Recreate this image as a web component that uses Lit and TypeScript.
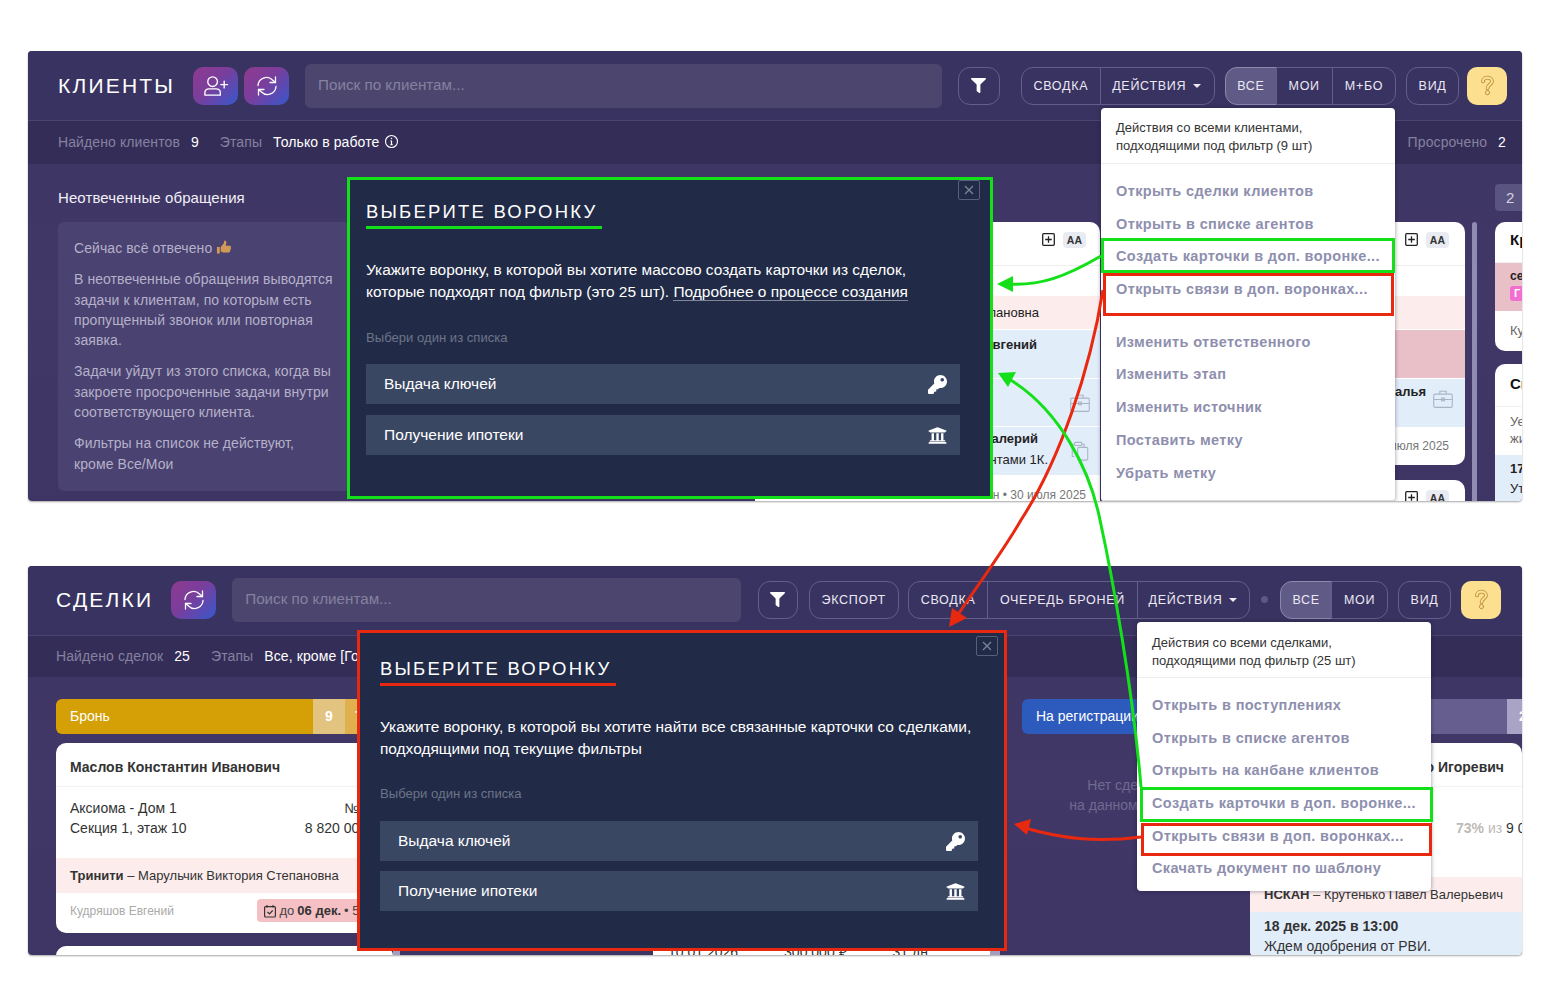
import { LitElement, html, css, svg, unsafeCSS } from "lit";
import { customElement } from "lit/decorators.js";

const GREEN = "#14e01a";
const RED = "#e8280f";
const greenCss = unsafeCSS(GREEN);
const redCss = unsafeCSS(RED);

const KEY =
  "M512 176C512 273 433 352 336 352c-11 0-22-1-33-3l-24 27a24 24 0 0 1-18 8h-37v40c0 13-11 24-24 24h-40v40c0 13-11 24-24 24H24c-13 0-24-11-24-24v-78c0-6 3-12 7-17l162-162C163 214 160 195 160 176 160 79 239 0 336 0 433 0 512 79 512 176zM336 128c0 27 21 48 48 48s48-21 48-48-21-48-48-48-48 21-48 48z";
const BANK =
  "M496 128v16a8 8 0 0 1-8 8h-24v12c0 7-5 12-12 12H60c-7 0-12-5-12-12v-12H24a8 8 0 0 1-8-8v-16a8 8 0 0 1 5-7l232-88a8 8 0 0 1 6 0l232 88a8 8 0 0 1 5 7zm-24 304H40c-13 0-24 11-24 24v16a8 8 0 0 0 8 8h464a8 8 0 0 0 8-8v-16c0-13-11-24-24-24zM96 192v192H60c-7 0-12 5-12 12v20h416v-20c0-7-5-12-12-12h-36V192h-64v192h-64V192h-64v192h-64V192H96z";
const FILTER =
  "M488 0H24C3 0-8 26 7 41L192 226V432c0 8 4 15 10 20l80 56c16 11 38 0 38-20V226L505 41C520 26 509 0 488 0z";

const keyIcon = html`<svg class="fn-ico" viewBox="0 0 512 512"><path fill="#fff" d=${KEY}></path></svg>`;
const bankIcon = html`<svg class="fn-ico" viewBox="0 0 512 512"><path fill="#fff" d=${BANK}></path></svg>`;

const syncIcon = html`<svg class="grad-ico" viewBox="0 0 24 24" fill="none" stroke="#fff" stroke-width="1.300" stroke-linecap="round" stroke-linejoin="round">
  <path d="M3 11.500a8.500 8.500 0 0 1 14.500-5.500l3 2.500"></path><path d="M20.500 3V8.500H15"></path>
  <path d="M21 12.500a8.500 8.500 0 0 1-14.500 5.500l-3-2.500"></path><path d="M3.500 21V15.500H9"></path>
</svg>`;

const userPlusIcon = html`<svg class="grad-ico wide" viewBox="0 0 28 24" fill="none" stroke="#fff" stroke-width="1.400" stroke-linecap="round" stroke-linejoin="round">
  <circle cx="11" cy="7.500" r="5"></circle>
  <path d="M3 21.500v-2.500c0-2.500 2-4 4.500-4h7c2.500 0 4.500 1.500 4.500 4v2.500z"></path>
  <path d="M23 7v7M19.500 10.500h7"></path>
</svg>`;

const helpIcon = html`<svg class="help-ico" viewBox="0 0 20 28" fill="none" stroke-linecap="round" stroke-linejoin="round">
  <path stroke="#b98f3c" stroke-width="5" d="M4 8.500C4 5 7 3.500 10 3.500s6 2 6 5c0 4-6 4.500-6 9"></path>
  <circle cx="10" cy="23.500" r="2.800" fill="#fde08f" stroke="#b98f3c" stroke-width="1.300"></circle>
  <path stroke="#fde08f" stroke-width="2.700" d="M4 8.500C4 5 7 3.500 10 3.500s6 2 6 5c0 4-6 4.500-6 9"></path>
</svg>`;

const infoIcon = html`<svg class="info-ico" viewBox="0 0 16 16" fill="none" stroke="#fff" stroke-width="1.200">
  <circle cx="8" cy="8" r="6.400"></circle>
  <path d="M8 7.300v4M6.800 11.400h2.400M6.900 7.300H8" stroke-width="1.300"></path>
  <circle cx="8" cy="4.800" r=".8" fill="#fff" stroke="none"></circle>
</svg>`;

const thumbIcon = html`<svg class="thumb" viewBox="0 0 16 16">
  <path fill="#cf9a58" d="M1 7.500h3v7H1zM5 7.500l3-3.500 1-3.500c1.500 0 2.300 1 2 2.800L10.500 6H15c1 0 1.200 1.200.6 1.800.6.600.5 1.500-.2 1.900.4.700.2 1.500-.5 1.800.3.800-.2 1.700-1.100 1.700H8c-1.500 0-3-.7-3-1.500z"></path>
</svg>`;

const plusBox = html`<svg class="plus-box" viewBox="0 0 13 13" fill="none" stroke="#222" stroke-width="1.300">
  <rect x=".7" y=".7" width="11.600" height="11.600" rx="1"></rect><path d="M6.500 3.200v6.600M3.200 6.500h6.600"></path>
</svg>`;

const briefcase = html`<svg class="soft-ico" viewBox="0 0 22 20" fill="none" stroke="#a9b4c6" stroke-width="1.200">
  <rect x=".8" y="4.600" width="20.400" height="14.600" rx="1.500"></rect>
  <path d="M7.500 4.600V1.400h7v3.200M.8 10.500h20.400"></path><rect x="9.500" y="9" width="3" height="3"></rect>
</svg>`;

const clipboard = html`<svg class="soft-ico" viewBox="0 0 22 22" fill="none" stroke="#a9b4c6" stroke-width="1.200">
  <path d="M5 17H2.500V3.500H5M13 3.500h2.500v3"></path><rect x="5" y="1.500" width="8" height="3.500" rx="1"></rect>
  <rect x="8.500" y="7" width="11" height="14" rx="1.500"></rect>
</svg>`;

const calendar = html`<svg class="cal" viewBox="0 0 14 14" fill="none" stroke="#333" stroke-width="1.200">
  <rect x="1.600" y="2.600" width="10.800" height="10.400" rx="1"></rect>
  <path d="M4 1v2.500M10 1v2.500M4.500 8l2 2 3.200-3.500"></path>
</svg>`;

@customElement("app-root")
export class AppRoot extends LitElement {
  static styles = css`
    :host {
      display: block;
      position: relative;
      width: 1557px;
      height: 1000px;
      background: #fff;
      font-family: "Liberation Sans", Arial, sans-serif;
      overflow: hidden;
    }

    .page {
      display: flex;
      flex-direction: column;
      gap: 65px;
      padding: 51px 35px 0 28px;
    }

    .win {
      position: relative;
      overflow: hidden;
      border-radius: 4px;
      background: linear-gradient(180deg, #3a3463 0%, #423867 55%, #3f3565 100%);
      box-shadow: 0 1px 2px rgba(0, 0, 0, 0.35);
    }

    .win.clients { height: 450px; }
    .win.deals { height: 389px; }

    /* header */
    .head {
      display: flex;
      align-items: center;
      height: 70px;
      padding: 0 15px 0 30px;
      border-bottom: 1px solid #4a4470;
      box-sizing: border-box;
      background: #393361;
    }

    .deals .head { padding: 0 21px 2px 28px; }

    .title {
      font-size: 21px;
      letter-spacing: 2.200px;
      color: #fff;
      margin-right: 18px;
    }

    .grad {
      display: flex;
      align-items: center;
      justify-content: center;
      width: 45px;
      height: 38px;
      margin-right: 6px;
      border-radius: 10px;
      background: linear-gradient(135deg, #8f3a8f 0%, #7a3e9c 45%, #3658cc 100%);
    }

    .grad-ico { width: 24px; height: 24px; }
    .grad-ico.wide { width: 27px; }

    .search {
      flex: 1;
      height: 44px;
      margin: 0 16px 0 10px;
      padding: 0 0 2px 13px;
      box-sizing: border-box;
      display: flex;
      align-items: center;
      border-radius: 6px;
      background: #4c466f;
      color: #85819f;
      font-size: 15.200px;
    }

    .deals .search { margin-right: 17px; }

    .btn {
      display: flex;
      align-items: center;
      justify-content: center;
      height: 38px;
      box-sizing: border-box;
      padding: 0 12px;
      border: 1px solid #645e8b;
      color: #ece9f4;
      font-size: 12.500px;
      letter-spacing: 0.700px;
      white-space: nowrap;
    }

    .round { border-radius: 12px; }
    .left { border-radius: 12px 0 0 12px; }
    .right { border-radius: 0 12px 12px 0; margin-left: -1px; }
    .mid { margin-left: -1px; padding: 0 11.500px; }
    .clients .mid { padding: 0 12px; }
    .on { background: #5f5a86; border-color: #8d89ad; padding: 0 11px; }
    .view { padding: 0 11.500px; }
    .actions { padding: 0 13px 0 11px; }
    .deals .actions { padding-right: 12px; }
    .caret {
      width: 0;
      height: 0;
      margin-left: 7px;
      border: 4px solid transparent;
      border-top-color: #ece9f4;
      border-bottom: 0;
    }

    .filter-btn { width: 42px; padding: 0; margin-right: 21px; }
    .filter-btn svg { width: 15px; height: 15px; }
    .deals .filter-btn { width: 40px; margin-right: 11px; }
    .gap10 { margin-left: 10px; }
    .gap9 { margin-left: 9px; }
    .dot {
      flex: none;
      width: 7px;
      height: 7px;
      margin: 0 12px 0 11px;
      border-radius: 50%;
      background: #5d5886;
    }

    .help {
      display: flex;
      align-items: center;
      justify-content: center;
      width: 40px;
      height: 38px;
      margin-left: 10px;
      border-radius: 10px;
      background: #fde08f;
    }

    .clients .help { margin-left: 8px; }
    .help-ico { width: 15px; height: 25px; }

    /* sub bar */
    .sub {
      display: flex;
      align-items: center;
      height: 43px;
      padding: 0 16px 2px 30px;
      box-sizing: border-box;
      background: #332d57;
      font-size: 14px;
      letter-spacing: 0.100px;
      color: #85819f;
      white-space: nowrap;
    }

    .deals .sub { height: 41px; padding-left: 28px; }
    .sub b { font-weight: 400; color: #fff; margin: 0 21px 0 11px; }
    .sub b.last { margin-right: 5px; }
    .sub b.end { margin-right: 0; }
    .sub .push { margin-left: auto; }
    .info-ico { width: 15px; height: 15px; }

    /* clients board */
    .board {
      display: flex;
      padding-left: 30px;
      height: 340px;
    }

    .panel-col { width: 300px; flex: none; }
    .panel-title { margin: 24px 0 14px; line-height: 20px; font-size: 15px; letter-spacing: 0.100px; color: #f1eff7; }
    .panel {
      height: 269px;
      padding: 16px 16px;
      box-sizing: border-box;
      border-radius: 6px;
      background: #4a4270;
      color: #b5b1ca;
      font-size: 14px;
      letter-spacing: 0.080px;
      line-height: 20.300px;
    }
    .panel p { margin: 0 0 11px; width: 264px; }
    .thumb { width: 15px; height: 15px; vertical-align: -2px; }

    .k-col { flex: none; padding-top: 58px; width: 345px; }
    .k-a { margin-left: 397px; }
    .k-b { margin-left: 20px; }
    .k-c { margin-left: 18px; width: 100px; position: relative; }

    .scroll {
      flex: none;
      width: 5px;
      margin: 58px 0 0 7px;
      border-radius: 3px;
      background: #8f8bb1;
    }

    .k-card {
      overflow: hidden;
      border-radius: 10px;
      background: #fff;
      color: #222;
      font-size: 13px;
      margin-bottom: 15px;
    }

    .k-head {
      display: flex;
      align-items: center;
      justify-content: flex-end;
      gap: 8px;
      height: 44px;
      padding: 0 14px 8px 0;
      box-sizing: border-box;
      border-bottom: 1px solid #eee;
    }

    .plus-box { width: 13px; height: 13px; }
    .aa {
      padding: 2px 4px;
      border-radius: 4px;
      background: #e9ebf3;
      font-size: 10.500px;
      font-weight: 700;
      color: #333;
    }

    .row {
      display: flex;
      align-items: center;
      justify-content: flex-end;
      box-sizing: border-box;
      white-space: nowrap;
    }

    .h30 { height: 30px; }
    .pink { background: #fceceb; }
    .pink2 { background: #e9bfc8; }
    .blue { background: #e2edfa; }

    .k-a .pink { height: 33px; padding-right: 61px; margin-bottom: 1px; }
    .k-a .b1 { height: 48px; padding: 0 63px 20px 0; font-weight: 700; margin-bottom: 1px; }
    .k-a .b2 { height: 47px; padding-right: 10px; }
    .k-a .b3 { height: 48px; flex-direction: column; align-items: flex-end; justify-content: flex-start; margin-top: 1px; position: relative; }
    .k-a .b3 .l1 { font-weight: 700; margin-right: 62px; line-height: 20px; margin-top: 2px; }
    .k-a .b3 .l2 { margin-right: 52px; line-height: 21px; }
    .k-a .b3 .soft-ico { position: absolute; right: 10px; top: 14px; }
    .k-a .foot { height: 40px; padding-right: 14px; color: #777; font-size: 12px; }

    .soft-ico { width: 20px; height: 20px; }

    .k-b .main { height: 243px; }
    .k-b .pink { height: 33px; margin-bottom: 1px; }
    .k-b .pink2 { height: 48px; margin-bottom: 1px; }
    .k-b .b1 { height: 48px; padding: 0 12px 8px 0; gap: 7px; align-items: center; }
    .k-b .b1 span { font-weight: 700; margin-bottom: 15px; }
    .k-b .foot { height: 38px; padding-right: 16px; color: #777; font-size: 12px; }
    .k-b .k-head { padding-right: 16px; }

    .badge {
      position: absolute;
      top: 20px;
      left: 0;
      width: 40px;
      height: 27px;
      padding-left: 11px;
      box-sizing: border-box;
      line-height: 27px;
      border-radius: 4px;
      background: #5a5480;
      color: #d6d3e4;
      font-size: 15px;
    }

    .k-c .k-card { font-size: 13px; margin-bottom: 13px; }
    .k-c .t { padding: 0 0 0 15px; white-space: nowrap; }
    .c1-head { height: 40px; line-height: 36px; font-size: 15px; font-weight: 700; color: #111; border-bottom: 1px solid #f0f0f0; }
    .c1-pink { height: 48px; padding-top: 6px !important; box-sizing: border-box; background: #e9bfc8; font-weight: 700; font-size: 12px; line-height: 14px; }
    .tag { display: block; width: 30px; height: 15px; padding-left: 4px; box-sizing: border-box; margin-top: 3px; border-radius: 3px; background: #f06fd0; color: #fff; font-size: 11px; line-height: 15px; }
    .c1-foot { height: 40px; line-height: 40px; color: #666; }
    .c2-head { height: 42px; line-height: 40px; font-size: 15px; font-weight: 700; color: #111; border-bottom: 1px solid #f0f0f0; }
    .c2-body { height: 48px; padding-top: 6px !important; box-sizing: border-box; line-height: 17px; color: #666; }
    .c2-blue { height: 60px; padding-top: 4px !important; box-sizing: border-box; background: #e2edfa; line-height: 20px; color: #222; }
    .c2-blue b { display: block; font-size: 13px; }

    /* deals board */
    .d-board {
      display: flex;
      padding: 22px 0 0 28px;
      height: 300px;
    }

    .d-a { flex: none; width: 337px; }
    .stage {
      display: flex;
      height: 35px;
      border-radius: 6px;
      overflow: hidden;
      color: #fff;
      font-size: 14px;
      line-height: 35px;
    }
    .stage .name { flex: 1; padding-left: 14px; white-space: nowrap; }
    .stage .seg { width: 32px; text-align: center; font-weight: 700; }
    .gold { background: #d4a006; }
    .gold .s1 { background: #e3c380; }
    .gold .s2 { background: #e0b04f; width: 48px; text-align: left; padding-left: 10px; box-sizing: border-box; }
    .regs { background: #2d5abd; }
    .lilac { background: #655e8e; border-radius: 0; }
    .lilac .seg { background: #a9a4c6; width: 15px; flex: none; text-align: left; padding-left: 12px; box-sizing: border-box; overflow: hidden; }

    .d-card {
      margin-top: 9px;
      border-radius: 10px;
      overflow: hidden;
      background: #fff;
      color: #333;
      font-size: 14px;
    }

    .d-card .name-row {
      height: 44px;
      padding: 0 14px;
      line-height: 49px;
      font-weight: 700;
      border-bottom: 1px solid #f2f2f2;
      box-sizing: border-box;
      white-space: nowrap;
    }

    .d-body {
      display: flex;
      justify-content: space-between;
      height: 71px;
      padding: 11px 14px 0;
      box-sizing: border-box;
      line-height: 20px;
    }

    .d-body .r { text-align: right; }
    .d-band { height: 35px; padding: 0 14px; line-height: 35px; background: #fceceb; font-size: 13px; white-space: nowrap; }
    .d-foot { display: flex; align-items: center; justify-content: space-between; height: 40px; padding: 0 2px 5px 14px; box-sizing: border-box; color: #aaa; font-size: 12px; white-space: nowrap; }
    .pill {
      display: flex;
      align-items: center;
      gap: 3px;
      height: 23px;
      padding: 0 6px;
      border-radius: 4px;
      background: #f5c0c4;
      color: #444;
      font-size: 13px;
    }
    .pill b { color: #333; }
    .cal { width: 14px; height: 14px; }
    .d-next { height: 40px; margin-top: 13px; border-radius: 10px; background: #fff; }

    .d-scroll {
      flex: none;
      width: 7px;
      height: 6px;
      margin-top: 252px;
      background: #a29ebf;
    }
    .d-b {
      flex: none;
      width: 337px;
      height: 40px;
      margin: 242px 0 0 253px;
      padding: 0 15px;
      box-sizing: border-box;
      display: flex;
      gap: 46px;
      background: #fff;
      color: #333;
      font-size: 14px;
      line-height: 22px;
    }
    .d-scroll2 { width: 10px; }
    .d-c { flex: none; width: 203px; margin-left: 22px; }
    .empty { margin-top: 41px; text-align: center; color: #6f6a90; font-size: 14px; line-height: 20px; white-space: nowrap; }
    .d-d { flex: none; width: 272px; margin-left: 25px; }
    .d-d .name-row { text-align: right; padding-right: 18px; }
    .d-d .d-body { height: 90px; padding: 31px 0 0 206px; white-space: nowrap; }
    .pct { color: #bdbab5; font-weight: 700; }
    .muted { color: #bdbab5; }
    .d-note { padding: 4px 14px; background: #e2edfa; line-height: 20px; }

    /* actions menu */
    .menu {
      position: absolute;
      width: 294px;
      border-radius: 4px;
      background: #fff;
      box-shadow: 0 0 4px rgba(20, 15, 50, 0.45);
    }
    .menu.m1 { left: 1073px; top: 57px; height: 394px; box-sizing: border-box; border-bottom: 2px solid #d8d8dd; }
    .menu.m2 { left: 1109px; top: 56px; padding-bottom: 6px; }
    .menu-head {
      height: 56px;
      padding: 11px 15px 0;
      box-sizing: border-box;
      border-bottom: 1px solid #eee;
      font-size: 13px;
      line-height: 18px;
      color: #333;
    }
    .m2 .menu-head { padding-top: 12px; }
    .menu-list { padding-top: 11px; }
    .menu-item {
      height: 32.700px;
      padding-left: 15px;
      line-height: 32.700px;
      font-size: 14.500px;
      font-weight: 700;
      letter-spacing: 0.380px;
      color: #8e8fae;
      white-space: nowrap;
    }
    .menu-gap { height: 20px; }

    /* funnel dialog */
    .fn {
      position: absolute;
      box-sizing: border-box;
      background: #212b47;
      color: #fff;
    }
    .fn.green { left: 319px; top: 126px; width: 646px; height: 322px; border: 3px solid ${greenCss}; padding: 20px 30px 0 16px; }
    .fn.red { left: 329px; top: 64px; width: 650px; height: 321px; border: 3px solid ${redCss}; padding: 24px 26px 0 20px; }
    .fn-title {
      display: inline-block;
      padding: 0 5px 3px 0;
      font-size: 18.500px;
      line-height: 23px;
      letter-spacing: 2.200px;
      white-space: nowrap;
    }
    .green .fn-title { border-bottom: 3px solid ${greenCss}; }
    .red .fn-title { border-bottom: 3px solid ${redCss}; }
    .fn-text { margin: 30px 0 0; font-size: 15.450px; line-height: 22px; white-space: nowrap; }
    .fn-text u { text-decoration: none; border-bottom: 1px solid #7f8799; }
    .fn-label { margin: 27px 0 18px; color: #6d7488; font-size: 13.100px; line-height: 16px; }
    .red .fn-label { margin: 26px 0 19px; }
    .fn-opt {
      display: flex;
      align-items: center;
      justify-content: space-between;
      height: 40px;
      margin-bottom: 11px;
      padding: 0 13px 0 18px;
      background: #3a4763;
      font-size: 15.500px;
    }
    .red .fn-opt { margin-bottom: 10px; }
    .fn-ico { width: 19px; height: 19px; }
    .fn-close {
      position: absolute;
      display: flex;
      align-items: center;
      justify-content: center;
      width: 22px;
      height: 20px;
      box-sizing: border-box;
      border: 1.500px solid #56607a;
      border-radius: 2px;
    }
    .green .fn-close { top: 0; right: 10px; }
    .red .fn-close { top: 3px; right: 6px; }
    .fn-close svg { width: 10px; height: 10px; }

    /* annotations */
    .marks {
      position: absolute;
      left: 0;
      top: 0;
      width: 1557px;
      height: 1000px;
      pointer-events: none;
    }
  `;

  private modal(kind: string, text: unknown) {
    return html`
      <div class="fn ${kind}">
        <div class="fn-close">
          <svg viewBox="0 0 10 10" stroke="#7c8497" stroke-width="1.300"><path d="M1 1l8 8M9 1l-8 8"></path></svg>
        </div>
        <div class="fn-title">ВЫБЕРИТЕ ВОРОНКУ</div>
        <p class="fn-text">${text}</p>
        <div class="fn-label">Выбери один из списка</div>
        <div class="fn-opt"><span>Выдача ключей</span>${keyIcon}</div>
        <div class="fn-opt"><span>Получение ипотеки</span>${bankIcon}</div>
      </div>
    `;
  }

  private menu(cls: string, head: unknown, groups: string[][]) {
    return html`
      <div class="menu ${cls}">
        <div class="menu-head">${head}</div>
        <div class="menu-list">
          ${groups.map(
            (items, i) => html`
              ${i > 0 ? html`<div class="menu-gap"></div>` : ""}
              ${items.map((t) => html`<div class="menu-item">${t}</div>`)}
            `
          )}
        </div>
      </div>
    `;
  }

  private clients() {
    return html`
      <div class="win clients">
        <div class="head">
          <div class="title">КЛИЕНТЫ</div>
          <div class="grad">${userPlusIcon}</div>
          <div class="grad">${syncIcon}</div>
          <div class="search">Поиск по клиентам...</div>
          <div class="btn round filter-btn">
            <svg viewBox="0 0 512 512"><path fill="#fff" d=${FILTER}></path></svg>
          </div>
          <div class="btn left">СВОДКА</div>
          <div class="btn right actions">ДЕЙСТВИЯ<span class="caret"></span></div>
          <div class="btn left on gap10">ВСЕ</div>
          <div class="btn mid">МОИ</div>
          <div class="btn right">М+БО</div>
          <div class="btn round view gap10">ВИД</div>
          <div class="help">${helpIcon}</div>
        </div>
        <div class="sub">
          Найдено клиентов <b>9</b> Этапы <b class="last">Только в работе</b>${infoIcon}
          <span class="push">Просрочено</span><b class="end">2</b>
        </div>
        <div class="board">
          <div class="panel-col">
            <div class="panel-title">Неотвеченные обращения</div>
            <div class="panel">
              <p>Сейчас всё отвечено ${thumbIcon}</p>
              <p>В неотвеченные обращения выводятся задачи к клиентам, по которым есть пропущенный звонок или повторная заявка.</p>
              <p>Задачи уйдут из этого списка, когда вы закроете просроченные задачи внутри соответствующего клиента.</p>
              <p>Фильтры на список не действуют,<br />кроме Все/Мои</p>
            </div>
          </div>
          <div class="k-col k-a">
            <div class="k-card">
              <div class="k-head">${plusBox}<span class="aa">AA</span></div>
              <div class="h30"></div>
              <div class="row pink">Мария Степановна</div>
              <div class="row blue b1">Кудряшов Евгений</div>
              <div class="row blue b2">${briefcase}</div>
              <div class="row blue b3">
                <span class="l1">Крутенько Валерий</span>
                <span class="l2">с документами 1К.</span>
                ${clipboard}
              </div>
              <div class="row foot">Иван • 30 июля 2025</div>
            </div>
          </div>
          <div class="k-col k-b">
            <div class="k-card main">
              <div class="k-head">${plusBox}<span class="aa">AA</span></div>
              <div class="h30"></div>
              <div class="row pink"></div>
              <div class="row pink2"></div>
              <div class="row blue b1"><span>Наталья</span>${briefcase}</div>
              <div class="row foot">29 июля 2025</div>
            </div>
            <div class="k-card">
              <div class="k-head">${plusBox}<span class="aa">AA</span></div>
            </div>
          </div>
          <div class="scroll"></div>
          <div class="k-col k-c">
            <div class="badge">2</div>
            <div class="k-card">
              <div class="t c1-head">Кравцов</div>
              <div class="t c1-pink">сегодня<span class="tag">Г</span></div>
              <div class="t c1-foot">Кудряшов</div>
            </div>
            <div class="k-card">
              <div class="t c2-head">Смирнов</div>
              <div class="t c2-body">Уехал<br />жилье</div>
              <div class="t c2-blue"><b>17 дек.</b>Уточнить</div>
            </div>
          </div>
        </div>
        ${this.modal(
          "green",
          html`Укажите воронку, в которой вы хотите массово создать карточки из сделок,<br />
            которые подходят под фильтр (это 25 шт). <u>Подробнее о процессе создания</u>`
        )}
        ${this.menu(
          "m1",
          html`Действия со всеми клиентами,<br />подходящими под фильтр (9 шт)`,
          [
            ["Открыть сделки клиентов", "Открыть в списке агентов", "Создать карточки в доп. воронке...", "Открыть связи в доп. воронках..."],
            ["Изменить ответственного", "Изменить этап", "Изменить источник", "Поставить метку", "Убрать метку"],
          ]
        )}
      </div>
    `;
  }

  private deals() {
    return html`
      <div class="win deals">
        <div class="head">
          <div class="title">СДЕЛКИ</div>
          <div class="grad">${syncIcon}</div>
          <div class="search">Поиск по клиентам...</div>
          <div class="btn round filter-btn">
            <svg viewBox="0 0 512 512"><path fill="#fff" d=${FILTER}></path></svg>
          </div>
          <div class="btn round">ЭКСПОРТ</div>
          <div class="btn left gap9">СВОДКА</div>
          <div class="btn mid">ОЧЕРЕДЬ БРОНЕЙ</div>
          <div class="btn right actions">ДЕЙСТВИЯ<span class="caret"></span></div>
          <span class="dot"></span>
          <div class="btn left on">ВСЕ</div>
          <div class="btn right">МОИ</div>
          <div class="btn round view gap10">ВИД</div>
          <div class="help">${helpIcon}</div>
        </div>
        <div class="sub">
          Найдено сделок <b>25</b> Этапы <b class="end">Все, кроме [Готово]</b>
        </div>
        <div class="d-board">
          <div class="d-a">
            <div class="stage gold">
              <span class="name">Бронь</span><span class="seg s1">9</span><span class="seg s2">7</span>
            </div>
            <div class="d-card">
              <div class="name-row">Маслов Константин Иванович</div>
              <div class="d-body">
                <div>Аксиома - Дом 1<br />Секция 1, этаж 10</div>
                <div class="r">№ 45<br />8 820 000 ₽</div>
              </div>
              <div class="d-band"><b>Тринити</b> – Марульчик Виктория Степановна</div>
              <div class="d-foot">
                Кудряшов Евгений
                <span class="pill">${calendar}до <b>06 дек.</b> • 55 дн</span>
              </div>
            </div>
            <div class="d-next"></div>
          </div>
          <div class="d-scroll"></div>
          <div class="d-b"><span>10.01.2026</span><span>300 000 ₽</span><span>31 дн</span></div>
          <div class="d-scroll d-scroll2"></div>
          <div class="d-c">
            <div class="stage regs"><span class="name">На регистрации</span></div>
            <div class="empty">Нет сделок<br />на данном этапе</div>
          </div>
          <div class="d-d">
            <div class="stage lilac"><span class="name"></span><span class="seg">2</span></div>
            <div class="d-card">
              <div class="name-row">Романенко Игоревич</div>
              <div class="d-body"><span><span class="pct">73%</span> <span class="muted">из</span> 9 000 000 ₽</span></div>
              <div class="d-band"><b>НСКАН</b> – Крутенько Павел Валерьевич</div>
              <div class="d-note"><b>18 дек. 2025 в 13:00</b><br />Ждем одобрения от РВИ.</div>
            </div>
          </div>
        </div>
        ${this.modal(
          "red",
          html`Укажите воронку, в которой вы хотите найти все связанные карточки со сделками,<br />
            подходящими под текущие фильтры`
        )}
        ${this.menu(
          "m2",
          html`Действия со всеми сделками,<br />подходящими под фильтр (25 шт)`,
          [
            ["Открыть в поступлениях", "Открыть в списке агентов", "Открыть на канбане клиентов", "Создать карточки в доп. воронке...", "Открыть связи в доп. воронках...", "Скачать документ по шаблону"],
          ]
        )}
      </div>
    `;
  }

  // hand-drawn callouts that tie the menu rows to their dialogs
  private marks() {
    return svg`
      <rect x="1102.500" y="239.500" width="291" height="32" fill="none" stroke=${GREEN} stroke-width="3"></rect>
      <rect x="1104.500" y="274.500" width="288" height="40" fill="none" stroke=${RED} stroke-width="3"></rect>
      <rect x="1141.500" y="788.500" width="290" height="32" fill="none" stroke=${GREEN} stroke-width="3"></rect>
      <rect x="1142.500" y="824.500" width="288" height="30" fill="none" stroke=${RED} stroke-width="3"></rect>

      <path d="M1103 290C1090 370 1060 460 1021 520C1005 548 985 575 957 616" fill="none" stroke=${RED} stroke-width="3"></path>
      <path d="M949 627L952 608L967 618Z" fill=${RED}></path>
      <path d="M1141 837C1095 843 1060 838 1025 828" fill="none" stroke=${RED} stroke-width="3"></path>
      <path d="M1014 824L1031 819L1027 835Z" fill=${RED}></path>

      <path d="M1101 256C1065 277 1040 286 1008 284" fill="none" stroke=${GREEN} stroke-width="3"></path>
      <path d="M997 284L1013 276L1013 292Z" fill=${GREEN}></path>
      <path d="M1141 787C1133 690 1112 575 1100 520C1090 470 1060 410 1009 379" fill="none" stroke=${GREEN} stroke-width="3"></path>
      <path d="M998 373L1016 372L1008 387Z" fill=${GREEN}></path>
    `;
  }

  render() {
    return html`
      <div class="page">${this.clients()} ${this.deals()}</div>
      <svg class="marks" viewBox="0 0 1557 1000">${this.marks()}</svg>
    `;
  }
}

declare global {
  interface HTMLElementTagNameMap {
    "app-root": AppRoot;
  }
}
